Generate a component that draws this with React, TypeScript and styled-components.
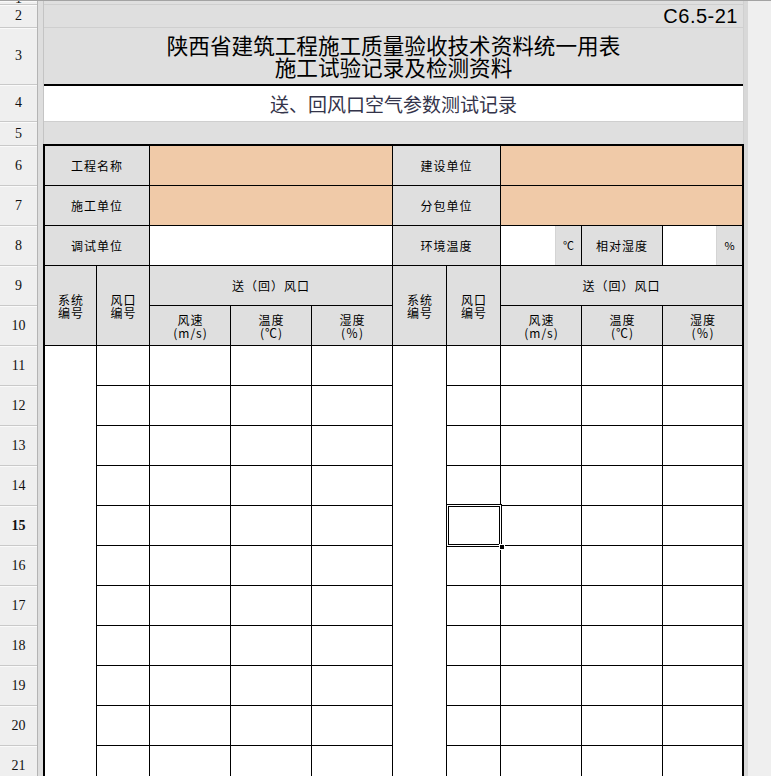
import React from 'react';
import styled, { createGlobalStyle, css } from 'styled-components';

const CJK = `"Noto Sans CJK SC", "Noto Sans", sans-serif`;

const GlobalStyle = createGlobalStyle`
  html, body {
    margin: 0;
    padding: 0;
    overflow: hidden;
    background: #efefef;
  }
  body {
    font-family: ${CJK};
  }
`;

const Window = styled.div`
  display: flex;
  width: 771px;
  height: 776px;
  overflow: hidden;
  box-sizing: border-box;
  border-top: 1px solid #a3a3a3;
  background: #efefef;
`;

/* ---------- row headers ---------- */
const RowHeaders = styled.div`
  flex: none;
  width: 38px;
  display: flex;
  flex-direction: column;
  box-sizing: border-box;
  background: #efefef;
  border-right: 1px solid #b4b4b4;
`;

const RowHead = styled.div<{ $h: number; $bold?: boolean; $clip?: boolean }>`
  flex: none;
  height: ${(p) => p.$h}px;
  box-sizing: border-box;
  border-bottom: 1px solid #c9c9c9;
  box-shadow: inset 0 1px 0 #fafafa;
  display: flex;
  justify-content: center;
  align-items: ${(p) => (p.$clip ? 'flex-end' : 'center')};
  overflow: hidden;
  font-family: "Liberation Serif", serif;
  font-size: 14px;
  line-height: 14px;
  color: #111;
  font-weight: ${(p) => (p.$bold ? 700 : 400)};
  span {
    margin-bottom: ${(p) => (p.$clip ? '-2px' : '0')};
  }
`;

const Splitter = styled.div`
  flex: none;
  width: 5px;
  background: #dedede;
`;

/* ---------- sheet ---------- */
const Sheet = styled.div`
  flex: none;
  width: 701px;
  display: flex;
  flex-direction: column;
`;

const TopSection = styled.div`
  display: flex;
  flex-direction: column;
  border-left: 1px solid #c4c4c4;
  border-right: 1px solid #d0d0d0;
`;

const TopRow = styled.div<{ $h: number; $white?: boolean; $thick?: boolean; $noLine?: boolean }>`
  height: ${(p) => p.$h}px;
  box-sizing: border-box;
  background: ${(p) => (p.$white ? '#ffffff' : '#dfdfdf')};
  border-bottom: ${(p) =>
    p.$thick ? '2px solid #000' : p.$noLine ? 'none' : '1px solid #cfcfcf'};
  display: flex;
  align-items: center;
`;

const Code = styled.div`
  flex: 1;
  text-align: right;
  padding-right: 5px;
  font-family: "Liberation Sans", sans-serif;
  font-size: 20px;
  letter-spacing: 0.5px;
  color: #000;
  line-height: 22px;
`;

const Title = styled.div`
  flex: 1;
  text-align: center;
  font-family: ${CJK};
  font-size: 21.6px;
  line-height: 22px;
  color: #000;
  padding-bottom: 1px;
`;

const SubTitle = styled.div`
  flex: 1;
  text-align: center;
  font-family: ${CJK};
  font-size: 19px;
  line-height: 20px;
  color: #34344a;
`;

const Table = styled.div`
  display: grid;
  grid-template-columns: 51px 52px 80px 80px 80px 53px 53px 80px 80px 79px;
  grid-auto-rows: 39px;
  gap: 1px;
  background: #000;
  border: 2px solid #000;
  border-bottom: none;
`;

type Tone = 'gray' | 'white' | 'orange';
const toneBg: Record<Tone, string> = {
  gray: '#dfdfdf',
  white: '#ffffff',
  orange: '#f0caa8',
};

const Cell = styled.div<{ $c: string; $r: string; $tone: Tone; $selected?: boolean }>`
  grid-column: ${(p) => p.$c};
  grid-row: ${(p) => p.$r};
  background: ${(p) => toneBg[p.$tone]};
  display: flex;
  align-items: center;
  justify-content: center;
  text-align: center;
  font-family: ${CJK};
  font-size: 12px;
  line-height: 13px;
  letter-spacing: 1px;
  color: #000;
  min-width: 0;
  ${(p) =>
    p.$selected &&
    css`
      position: relative;
      z-index: 2;
      &::after {
        content: '';
        position: absolute;
        left: -1px;
        top: -2px;
        right: -2px;
        bottom: -2px;
        border: 1px solid #000;
        box-shadow: inset 0 0 0 1px #fff, inset 0 0 0 2px #000;
      }
      &::before {
        content: '';
        position: absolute;
        right: -5px;
        bottom: -5px;
        width: 4px;
        height: 4px;
        background: #000;
        border: 1px solid #fff;
        z-index: 3;
      }
    `}
`;

const Stack = styled.div`
  display: flex;
  flex-direction: column;
  align-items: center;
  padding-left: 1px;
`;

const Split = styled.div`
  display: flex;
  align-self: stretch;
  flex: 1;
`;

const Blank = styled.div`
  flex: 1;
  background: #fff;
`;

const Unit = styled.div`
  flex: none;
  width: 25px;
  border-left: 1px solid #d4d4d4;
  background: #dfdfdf;
  display: flex;
  align-items: center;
  justify-content: center;
  font-size: 11px;
  letter-spacing: 0;
`;

const RightStrip = styled.div`
  flex: none;
  width: 4px;
  background: #d8d8d8;
`;

const Filler = styled.div`
  flex: 1;
  background: #efefef;
`;

const rowHeads: { n: number; h: number }[] = [
  { n: 1, h: 4 },
  { n: 2, h: 23 },
  { n: 3, h: 57 },
  { n: 4, h: 37 },
  { n: 5, h: 24 },
  ...Array.from({ length: 16 }, (_, i) => ({ n: 6 + i, h: 40 })),
];

const Lines: React.FC<{ lines: string[] }> = ({ lines }) => (
  <Stack>
    {lines.map((l, i) => (
      <span key={i}>{l}</span>
    ))}
  </Stack>
);

const HeaderGroup: React.FC<{ start: number }> = ({ start }) => (
  <>
    <Cell $c={`${start}`} $r="4 / span 2" $tone="gray">
      <Lines lines={['系统', '编号']} />
    </Cell>
    <Cell $c={`${start + 1}`} $r="4 / span 2" $tone="gray">
      <Lines lines={['风口', '编号']} />
    </Cell>
    <Cell $c={`${start + 2} / span 3`} $r="4" $tone="gray">
      送（回）风口
    </Cell>
    <Cell $c={`${start + 2}`} $r="5" $tone="gray">
      <Lines lines={['风速', '(m/s)']} />
    </Cell>
    <Cell $c={`${start + 3}`} $r="5" $tone="gray">
      <Lines lines={['温度', '(℃)']} />
    </Cell>
    <Cell $c={`${start + 4}`} $r="5" $tone="gray">
      <Lines lines={['湿度', '(％)']} />
    </Cell>
  </>
);

const dataRows = Array.from({ length: 11 }, (_, i) => 6 + i);

export default function App() {
  return (
    <>
      <GlobalStyle />
      <Window>
        <RowHeaders>
          {rowHeads.map((r) => (
            <RowHead key={r.n} $h={r.h} $bold={r.n === 15} $clip={r.n === 1}>
              <span>{r.n}</span>
            </RowHead>
          ))}
        </RowHeaders>
        <Splitter />
        <Sheet>
          <TopSection>
            <TopRow $h={4} />
            <TopRow $h={23}>
              <Code>C6.5-21</Code>
            </TopRow>
            <TopRow $h={58} $thick>
              <Title>
                陕西省建筑工程施工质量验收技术资料统一用表
                <br />
                施工试验记录及检测资料
              </Title>
            </TopRow>
            <TopRow $h={36} $white>
              <SubTitle>送、回风口空气参数测试记录</SubTitle>
            </TopRow>
            <TopRow $h={22} $noLine />
          </TopSection>
          <Table>
            {/* row 6 */}
            <Cell $c="1 / span 2" $r="1" $tone="gray">工程名称</Cell>
            <Cell $c="3 / span 3" $r="1" $tone="orange" />
            <Cell $c="6 / span 2" $r="1" $tone="gray">建设单位</Cell>
            <Cell $c="8 / span 3" $r="1" $tone="orange" />
            {/* row 7 */}
            <Cell $c="1 / span 2" $r="2" $tone="gray">施工单位</Cell>
            <Cell $c="3 / span 3" $r="2" $tone="orange" />
            <Cell $c="6 / span 2" $r="2" $tone="gray">分包单位</Cell>
            <Cell $c="8 / span 3" $r="2" $tone="orange" />
            {/* row 8 */}
            <Cell $c="1 / span 2" $r="3" $tone="gray">调试单位</Cell>
            <Cell $c="3 / span 3" $r="3" $tone="white" />
            <Cell $c="6 / span 2" $r="3" $tone="gray">环境温度</Cell>
            <Cell $c="8" $r="3" $tone="white">
              <Split>
                <Blank />
                <Unit>℃</Unit>
              </Split>
            </Cell>
            <Cell $c="9" $r="3" $tone="gray">相对湿度</Cell>
            <Cell $c="10" $r="3" $tone="white">
              <Split>
                <Blank />
                <Unit>%</Unit>
              </Split>
            </Cell>
            {/* rows 9-10 */}
            <HeaderGroup start={1} />
            <HeaderGroup start={6} />
            {/* data rows 11-21 */}
            <Cell $c="1" $r="6 / span 11" $tone="white" />
            <Cell $c="6" $r="6 / span 11" $tone="white" />
            {dataRows.map((r) =>
              [2, 3, 4, 5, 7, 8, 9, 10].map((c) => (
                <Cell
                  key={`${r}-${c}`}
                  $c={`${c}`}
                  $r={`${r}`}
                  $tone="white"
                  $selected={r === 10 && c === 7}
                />
              ))
            )}
          </Table>
        </Sheet>
        <RightStrip />
        <Filler />
      </Window>
    </>
  );
}
